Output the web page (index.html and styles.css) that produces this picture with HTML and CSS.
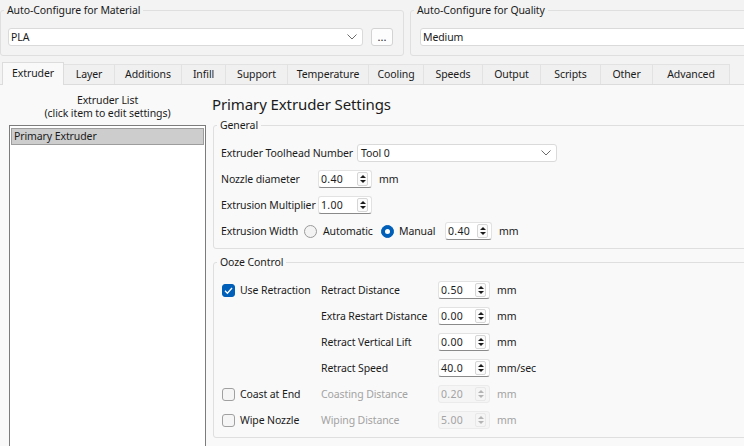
FILE: index.html
```html
<!DOCTYPE html>
<html>
<head>
<meta charset="utf-8">
<title>Extruder Settings</title>
<link rel="stylesheet" href="styles.css">
</head>
<body>
<div class="window">
  <div class="top">
    <fieldset class="grp grp-mat">
      <legend>Auto-Configure for Material</legend>
      <div class="combo-row">
        <div class="combo combo-mat"><span class="ctext">PLA</span><svg class="chev" width="10" height="6" viewBox="0 0 10 6"><polyline points="0.5,0.5 5,5 9.5,0.5" fill="none" stroke="#6b6b6b" stroke-width="1"/></svg></div>
        <button class="dots">...</button>
      </div>
    </fieldset>
    <fieldset class="grp grp-qual">
      <legend>Auto-Configure for Quality</legend>
      <div class="combo combo-qual"><span class="ctext">Medium</span></div>
    </fieldset>
  </div>

  <div class="tabs">
    <div class="tab sel">Extruder</div>
    <div class="tab">Layer</div>
    <div class="tab">Additions</div>
    <div class="tab">Infill</div>
    <div class="tab">Support</div>
    <div class="tab">Temperature</div>
    <div class="tab">Cooling</div>
    <div class="tab">Speeds</div>
    <div class="tab">Output</div>
    <div class="tab">Scripts</div>
    <div class="tab">Other</div>
    <div class="tab">Advanced</div>
  </div>

  <div class="pane">
    <div class="left">
      <div class="list-title">Extruder List</div>
      <div class="list-title">(click item to edit settings)</div>
      <div class="list">
        <div class="item sel">Primary Extruder</div>
      </div>
    </div>

    <div class="right">
      <h1 class="heading">Primary Extruder Settings</h1>

      <fieldset class="grp general">
        <legend>General</legend>
        <div class="row">
          <span class="lbl lbl-tool">Extruder Toolhead Number</span>
          <div class="combo combo-tool"><span class="ctext">Tool 0</span><svg class="chev" width="10" height="6" viewBox="0 0 10 6"><polyline points="0.5,0.5 5,5 9.5,0.5" fill="none" stroke="#6b6b6b" stroke-width="1"/></svg></div>
        </div>
        <div class="row">
          <span class="lbl lbl-short">Nozzle diameter</span>
          <div class="spin spin-54"><span class="val">0.40</span><span class="btns"><i class="up"></i><i class="dn"></i></span></div>
          <span class="unit">mm</span>
        </div>
        <div class="row">
          <span class="lbl lbl-short">Extrusion Multiplier</span>
          <div class="spin spin-54"><span class="val">1.00</span><span class="btns"><i class="up"></i><i class="dn"></i></span></div>
        </div>
        <div class="row">
          <span class="lbl lbl-width">Extrusion Width</span>
          <label class="ropt ropt-auto"><span class="radio"></span><span>Automatic</span></label>
          <label class="ropt ropt-man"><span class="radio on"></span><span>Manual</span></label>
          <div class="spin spin-47"><span class="val">0.40</span><span class="btns"><i class="up"></i><i class="dn"></i></span></div>
          <span class="unit">mm</span>
        </div>
      </fieldset>

      <fieldset class="grp ooze">
        <legend>Ooze Control</legend>
        <div class="ogrid">
          <label class="copt"><span class="chk on"><svg width="11" height="11" viewBox="0 0 11 11"><polyline points="2,5.8 4.4,8.2 9,3" fill="none" stroke="#fff" stroke-width="1.3"/></svg></span><span>Use Retraction</span></label>
          <span class="olbl">Retract Distance</span>
          <div class="spin"><span class="val">0.50</span><span class="btns"><i class="up"></i><i class="dn"></i></span></div>
          <span class="unit">mm</span>

          <span></span>
          <span class="olbl">Extra Restart Distance</span>
          <div class="spin"><span class="val">0.00</span><span class="btns"><i class="up"></i><i class="dn"></i></span></div>
          <span class="unit">mm</span>

          <span></span>
          <span class="olbl">Retract Vertical Lift</span>
          <div class="spin"><span class="val">0.00</span><span class="btns"><i class="up"></i><i class="dn"></i></span></div>
          <span class="unit">mm</span>

          <span></span>
          <span class="olbl">Retract Speed</span>
          <div class="spin"><span class="val">40.0</span><span class="btns"><i class="up"></i><i class="dn"></i></span></div>
          <span class="unit">mm/sec</span>

          <label class="copt"><span class="chk"></span><span>Coast at End</span></label>
          <span class="olbl dis">Coasting Distance</span>
          <div class="spin dis"><span class="val">0.20</span><span class="btns"><i class="up"></i><i class="dn"></i></span></div>
          <span class="unit dis">mm</span>

          <label class="copt"><span class="chk"></span><span>Wipe Nozzle</span></label>
          <span class="olbl dis">Wiping Distance</span>
          <div class="spin dis"><span class="val">5.00</span><span class="btns"><i class="up"></i><i class="dn"></i></span></div>
          <span class="unit dis">mm</span>
        </div>
      </fieldset>
    </div>
  </div>
</div>
</body>
</html>
```

FILE: styles.css
```css
* { box-sizing: border-box; }

html, body {
  margin: 0;
  padding: 0;
}

body {
  width: 744px;
  height: 446px;
  overflow: hidden;
  background: #f3f3f3;
  font-family: "Noto Sans", "Liberation Sans", sans-serif;
  font-size: 10.5px;
  letter-spacing: -0.1px;
  color: #1b1b1b;
  white-space: nowrap;
}

.window {
  display: flex;
  flex-direction: column;
  height: 446px;
}

/* ---------- group boxes ---------- */
.grp {
  margin: 0;
  min-width: 0;
  border: 1px solid #dfdfdf;
  border-radius: 3px;
}

.grp legend {
  padding: 0 3px;
  margin-left: -4px;
  line-height: 15px;
  height: 15px;
}

/* ---------- top area ---------- */
.top {
  display: flex;
  gap: 6px;
  padding-top: 3px;
}

.grp-mat {
  width: 404px;
  flex: none;
  padding: 10px 10px 9px 7px;
}

.grp-qual {
  flex: 1;
  margin-right: -30px;
  padding: 10px 0 9px 7px;
}

.combo-row {
  display: flex;
  align-items: center;
  gap: 8px;
}

.combo {
  display: flex;
  align-items: center;
  height: 18px;
  background: #ffffff;
  border: 1px solid #dadada;
  border-radius: 3px;
  padding: 0 5px 0 2px;
}

.combo .ctext { flex: 1; }
.combo .chev { flex: none; }

.combo-mat { width: 355px; }
.combo-qual { margin-left: 2px; }

.dots {
  width: 22px;
  height: 18px;
  padding: 0 0 3px 0;
  margin: 0;
  font-family: inherit;
  font-size: 11px;
  color: #1b1b1b;
  background: #fdfdfd;
  border: 1px solid #d3d3d3;
  border-radius: 3px;
}

/* ---------- tabs ---------- */
.tabs {
  display: flex;
  align-items: flex-end;
  height: 23px;
  margin-top: 6px;
  padding-left: 2px;
  border-bottom: 1px solid #dcdcdc;
}

.tab {
  height: 20px;
  line-height: 19px;
  text-align: center;
  background: #f0f0f0;
  border: 1px solid #e2e2e2;
  border-bottom: none;
  margin-right: -1px;
  flex: none;
}

.tab.sel {
  height: 23px;
  line-height: 20px;
  background: #f9f9f9;
  border-color: #dcdcdc;
  margin-bottom: -1px;
  position: relative;
  z-index: 1;
}

.tab:nth-child(1)  { width: 62px; }
.tab:nth-child(2)  { width: 52px; }
.tab:nth-child(3)  { width: 68px; }
.tab:nth-child(4)  { width: 45px; }
.tab:nth-child(5)  { width: 63px; }
.tab:nth-child(6)  { width: 82px; }
.tab:nth-child(7)  { width: 56px; }
.tab:nth-child(8)  { width: 60px; }
.tab:nth-child(9)  { width: 59px; }
.tab:nth-child(10) { width: 61px; }
.tab:nth-child(11) { width: 53px; }
.tab:nth-child(12) { width: 78px; }

/* ---------- pane ---------- */
.pane {
  flex: 1;
  display: flex;
  background: #f9f9f9;
  min-height: 0;
}

.left {
  width: 213px;
  flex: none;
  display: flex;
  flex-direction: column;
  padding: 9px 0 0 9px;
}

.list-title {
  width: 197px;
  height: 13px;
  text-align: center;
  line-height: 13px;
}

.list {
  flex: 1;
  width: 197px;
  margin-top: 5px;
  background: #ffffff;
  border: 1px solid #7c7c7c;
  border-bottom: none;
  padding: 2px 1px 0 1px;
}

.item {
  height: 17px;
  line-height: 15px;
  padding-left: 2px;
  border: 1px solid transparent;
}

.item.sel {
  background: #cdcdcd;
  border-color: #9d9d9d;
}

.right {
  flex: 1;
  min-width: 0;
  padding-top: 8px;
  margin-right: -40px;
}

.heading {
  margin: 0 0 3px -1px;
  height: 22px;
  line-height: 22px;
  font-size: 15px;
  font-weight: 400;
  letter-spacing: -0.1px;
  color: #1b1b1b;
}

.general {
  padding: 7px 0 4px 7px;
}

.row {
  display: flex;
  align-items: center;
  height: 26px;
}

.lbl { flex: none; }
.lbl-tool { width: 136px; }
.lbl-short { width: 97px; }
.lbl-width { width: 83px; }

.combo-tool {
  width: 200px;
  padding-left: 3px;
}

.unit {
  padding-left: 7px;
}

/* ---------- spin boxes ---------- */
.spin {
  display: flex;
  align-items: center;
  width: 52px;
  height: 18px;
  background: #ffffff;
  border: 1px solid #e2e2e2;
  border-bottom-color: #8a8a8a;
  border-radius: 3px;
  padding: 0 3px 0 2px;
  flex: none;
  letter-spacing: 0.3px;
}

.spin-54 { width: 54px; }
.spin-47 { width: 47px; }

.spin .val { flex: 1; }

.btns {
  width: 11px;
  height: 14px;
  margin-top: -1px;
  flex: none;
  display: flex;
  flex-direction: column;
  align-items: center;
  justify-content: center;
  gap: 2px;
  background: #fbfbfb;
  border: 1px solid #d6d6d6;
  border-radius: 2px;
}

.up, .dn {
  display: block;
  width: 0;
  height: 0;
  border-left: 3px solid transparent;
  border-right: 3px solid transparent;
}

.up { border-bottom: 3px solid #1b1b1b; }
.dn { border-top: 3px solid #1b1b1b; }

.spin.dis {
  background: #f5f5f5;
  border-color: #ebebeb;
  color: #a3a3a3;
}

.spin.dis .btns {
  background: #f5f5f5;
  border-color: #e8e8e8;
}

.spin.dis .up { border-bottom-color: #b4b4b4; }
.spin.dis .dn { border-top-color: #b4b4b4; }

/* ---------- radio ---------- */
.ropt {
  display: flex;
  align-items: center;
  flex: none;
}

.ropt-auto { width: 77px; gap: 6px; }
.ropt-man { width: 64px; gap: 5px; }

.radio {
  width: 13px;
  height: 13px;
  border-radius: 50%;
  border: 1px solid #9a9a9a;
  background: #f3f3f3;
  flex: none;
}

.radio.on {
  display: flex;
  align-items: center;
  justify-content: center;
  background: #005fb8;
  border-color: #005fb8;
}

.radio.on::after {
  content: "";
  width: 5px;
  height: 5px;
  border-radius: 50%;
  background: #ffffff;
}

/* ---------- ooze control ---------- */
.ooze {
  margin-top: 6px;
  padding: 7px 0 4px 7px;
}

.ogrid {
  display: grid;
  grid-template-columns: 100px 117px 52px auto;
  grid-auto-rows: 26px;
  align-items: center;
}

.copt {
  display: flex;
  align-items: center;
  gap: 5px;
  padding-left: 1px;
}

.chk {
  width: 13px;
  height: 13px;
  flex: none;
  border-radius: 3px;
  border: 1px solid #a0a0a0;
  background: #f5f5f5;
  display: flex;
  align-items: center;
  justify-content: center;
}

.chk.on {
  background: #005fb8;
  border-color: #005fb8;
}

.dis { color: #a3a3a3; }
```
